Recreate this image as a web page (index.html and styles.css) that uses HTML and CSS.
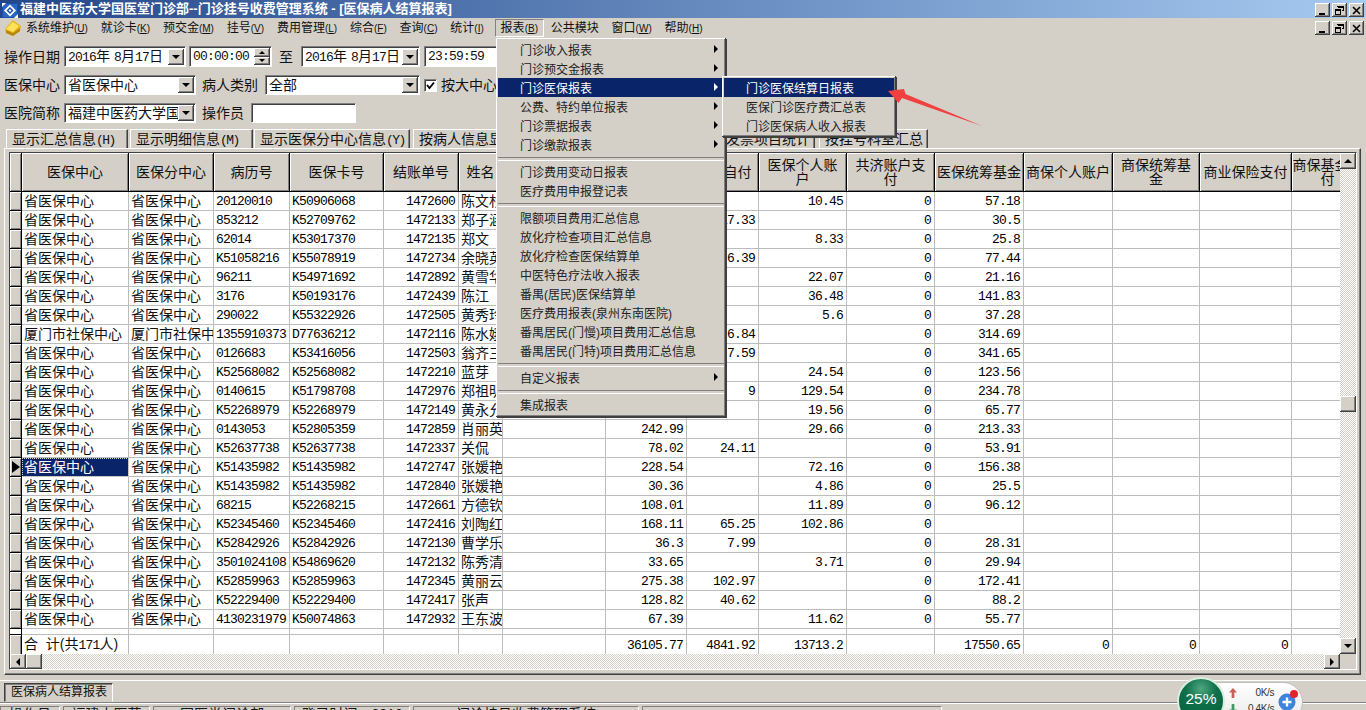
FILE: index.html
```html
<!DOCTYPE html>
<html lang="zh-CN">
<head>
<meta charset="utf-8">
<title>医保病人结算报表</title>
<link rel="stylesheet" href="styles.css">
</head>
<body>
<div class="app">
  <header class="titlebar">
    <svg class="app-icon" width="16" height="15" viewBox="0 0 16 15"><rect width="16" height="15" fill="#1b4fa8"/><rect x="1" y="1" width="14" height="13" fill="#2c66c4"/><path d="M8 1.5 14 7.5 8 13.5 2 7.5Z" fill="#fff"/><path d="M8 4 11.5 7.5 8 11 4.5 7.5Z" fill="#1b4fa8"/><path d="M8 6 9.5 7.5 8 9 6.5 7.5Z" fill="#fff"/><path d="M0 0H4L0 4ZM16 15H12L16 11Z" fill="#fff"/></svg>
    <span class="title-text">福建中医药大学国医堂门诊部--门诊挂号收费管理系统 - [医保病人结算报表]</span>
    <div class="winbtns">
      <button class="winbtn raised"><svg width="9" height="9" viewBox="0 0 9 9"><rect x="1" y="7" width="6" height="2"/></svg></button>
      <button class="winbtn raised"><svg width="9" height="9" viewBox="0 0 9 9"><path d="M2 0H9V5H7V4H8V2H3V1H2ZM0 3H6V9H0ZM1 5V8H5V5Z" fill-rule="evenodd"/></svg></button>
      <button class="winbtn closebtn raised"><svg width="9" height="9" viewBox="0 0 9 9"><path d="M1 1 8 8M8 1 1 8" stroke="#000" stroke-width="1.6"/></svg></button>
    </div>
  </header>

  <nav class="menubar">
    <svg class="menu-logo" width="17" height="17" viewBox="0 0 17 17"><path d="M1 10 9 1 17 7 16 12 9 17 2 14Z" fill="#e8b818"/><path d="M2 10 9 3 15 7 9 13Z" fill="#ffe25a"/><path d="M2 11 9 14 9 17 2 14ZM9 14 16 9 16 12 9 17Z" fill="#b8860f"/></svg>
    <ul class="menu-items">
      <li>系统维护<span class="key">(<u>U</u>)</span></li>
      <li>就诊卡<span class="key">(<u>K</u>)</span></li>
      <li>预交金<span class="key">(<u>M</u>)</span></li>
      <li>挂号<span class="key">(<u>V</u>)</span></li>
      <li>费用管理<span class="key">(<u>L</u>)</span></li>
      <li>综合<span class="key">(<u>F</u>)</span></li>
      <li>查询<span class="key">(<u>C</u>)</span></li>
      <li>统计<span class="key">(<u>I</u>)</span></li>
      <li class="open">报表<span class="key">(<u>B</u>)</span></li>
      <li>公共模块</li>
      <li>窗口<span class="key">(<u>W</u>)</span></li>
      <li>帮助<span class="key">(<u>H</u>)</span></li>
    </ul>
    <div class="winbtns">
      <button class="winbtn raised"><svg width="9" height="9" viewBox="0 0 9 9"><rect x="1" y="7" width="6" height="2"/></svg></button>
      <button class="winbtn raised"><svg width="9" height="9" viewBox="0 0 9 9"><path d="M2 0H9V5H7V4H8V2H3V1H2ZM0 3H6V9H0ZM1 5V8H5V5Z" fill-rule="evenodd"/></svg></button>
      <button class="winbtn closebtn raised"><svg width="9" height="9" viewBox="0 0 9 9"><path d="M1 1 8 8M8 1 1 8" stroke="#000" stroke-width="1.6"/></svg></button>
    </div>
  </nav>

  <section class="filters">
    <div class="frow r1">
      <label class="lbl">操作日期</label>
      <div class="field sunken w-date1"><span class="fval"><span class="d">2016</span>年 <span class="d">8</span>月<span class="d">17</span>日</span><span class="dropbtn raised"><i class="tri-d"></i></span></div>
      <div class="field sunken w-time1 ml3"><span class="fval d">00:00:00</span><span class="spin"><span class="raised"><i class="tri-u"></i></span><span class="raised"><i class="tri-d"></i></span></span></div>
      <span class="lbl zhi">至</span>
      <div class="field sunken w-date2"><span class="fval"><span class="d">2016</span>年 <span class="d">8</span>月<span class="d">17</span>日</span><span class="dropbtn raised"><i class="tri-d"></i></span></div>
      <div class="field sunken w-time2 ml4"><span class="fval d">23:59:59</span><span class="spin"><span class="raised"><i class="tri-u"></i></span><span class="raised"><i class="tri-d"></i></span></span></div>
    </div>
    <div class="frow r2">
      <label class="lbl">医保中心</label>
      <div class="field sunken w-combo"><span class="fval">省医保中心</span><span class="dropbtn raised"><i class="tri-d"></i></span></div>
      <label class="lbl ml6">病人类别</label>
      <div class="field sunken w-type ml7"><span class="fval">全部</span><span class="dropbtn raised"><i class="tri-d"></i></span></div>
      <span class="check sunken ml4"><svg width="9" height="9" viewBox="0 0 9 9"><path d="M1 4 3.5 7 8 1.5" fill="none" stroke="#000" stroke-width="1.8"/></svg></span>
      <label class="lbl ml5">按大中心统计</label>
    </div>
    <div class="frow r3">
      <label class="lbl">医院简称</label>
      <div class="field sunken w-combo"><span class="fval">福建中医药大学国医堂</span><span class="dropbtn raised"><i class="tri-d"></i></span></div>
      <label class="lbl ml6">操作员</label>
      <div class="field sunken w-oper ml7"></div>
    </div>
  </section>

  <div class="tabs">
    <span class="tab t1">显示汇总信息<span class="tkey">(H)</span></span>
    <span class="tab t2">显示明细信息<span class="tkey">(M)</span></span>
    <span class="tab t3">显示医保分中心信息<span class="tkey">(Y)</span></span>
    <span class="tab t4">按病人信息显示<span class="tkey">(P)</span></span>
    <span class="tab t5">按病人费用类别汇总<span class="tkey">(K)</span></span>
    <span class="tab t6">按发票项目统计</span>
    <span class="tab t7">按挂号科室汇总</span>
  </div>

  <main class="panel">
    <div class="grid">
      <div class="grid-body">
        <table class="data">
          <colgroup><col class="c0"><col class="c1"><col class="c2"><col class="c3"><col class="c4"><col class="c5"><col class="c6"><col class="c7"><col class="c8"><col class="c9"><col class="c10"><col class="c11"><col class="c12"><col class="c13"><col class="c14"><col class="c15"><col class="c16"></colgroup>
          <thead>
            <tr><th></th><th>医保中心</th><th>医保分中心</th><th>病历号</th><th>医保卡号</th><th>结账单号</th><th>姓名</th><th>科室</th><th>费用合计</th><th class="ziifu">现金自付</th><th>医保个人账<br>户</th><th>共济账户支<br>付</th><th>医保统筹基金</th><th>商保个人账户</th><th>商保统筹基<br>金</th><th>商业保险支付</th><th>商保基金支<br>付</th></tr>
          </thead>
          <tbody>
            <tr><th></th><td>省医保中心</td><td>省医保中心</td><td class="n">20120010</td><td class="n">K50906068</td><td class="n r">1472600</td><td>陈文杉</td><td></td><td class="n r">67.63</td><td class="n r"></td><td class="n r">10.45</td><td class="n r">0</td><td class="n r">57.18</td><td></td><td></td><td></td><td></td></tr>
            <tr><th></th><td>省医保中心</td><td>省医保中心</td><td class="n">853212</td><td class="n">K52709762</td><td class="n r">1472133</td><td>郑子涵</td><td></td><td class="n r">47.83</td><td class="n r">17.33</td><td class="n r"></td><td class="n r">0</td><td class="n r">30.5</td><td></td><td></td><td></td><td></td></tr>
            <tr><th></th><td>省医保中心</td><td>省医保中心</td><td class="n">62014</td><td class="n">K53017370</td><td class="n r">1472135</td><td>郑文</td><td></td><td class="n r">34.13</td><td class="n r"></td><td class="n r">8.33</td><td class="n r">0</td><td class="n r">25.8</td><td></td><td></td><td></td><td></td></tr>
            <tr><th></th><td>省医保中心</td><td>省医保中心</td><td class="n">K51058216</td><td class="n">K55078919</td><td class="n r">1472734</td><td>余晓英</td><td></td><td class="n r">83.83</td><td class="n r">6.39</td><td class="n r"></td><td class="n r">0</td><td class="n r">77.44</td><td></td><td></td><td></td><td></td></tr>
            <tr><th></th><td>省医保中心</td><td>省医保中心</td><td class="n">96211</td><td class="n">K54971692</td><td class="n r">1472892</td><td>黄雪华</td><td></td><td class="n r">43.23</td><td class="n r"></td><td class="n r">22.07</td><td class="n r">0</td><td class="n r">21.16</td><td></td><td></td><td></td><td></td></tr>
            <tr><th></th><td>省医保中心</td><td>省医保中心</td><td class="n">3176</td><td class="n">K50193176</td><td class="n r">1472439</td><td>陈江</td><td></td><td class="n r">178.31</td><td class="n r"></td><td class="n r">36.48</td><td class="n r">0</td><td class="n r">141.83</td><td></td><td></td><td></td><td></td></tr>
            <tr><th></th><td>省医保中心</td><td>省医保中心</td><td class="n">290022</td><td class="n">K55322926</td><td class="n r">1472505</td><td>黄秀玲</td><td></td><td class="n r">42.88</td><td class="n r"></td><td class="n r">5.6</td><td class="n r">0</td><td class="n r">37.28</td><td></td><td></td><td></td><td></td></tr>
            <tr><th></th><td>厦门市社保中心</td><td>厦门市社保中心</td><td class="n">1355910373</td><td class="n">D77636212</td><td class="n r">1472116</td><td>陈水娥</td><td></td><td class="n r">321.53</td><td class="n r">6.84</td><td class="n r"></td><td class="n r">0</td><td class="n r">314.69</td><td></td><td></td><td></td><td></td></tr>
            <tr><th></th><td>省医保中心</td><td>省医保中心</td><td class="n">0126683</td><td class="n">K53416056</td><td class="n r">1472503</td><td>翁齐三</td><td></td><td class="n r">349.24</td><td class="n r">7.59</td><td class="n r"></td><td class="n r">0</td><td class="n r">341.65</td><td></td><td></td><td></td><td></td></tr>
            <tr><th></th><td>省医保中心</td><td>省医保中心</td><td class="n">K52568082</td><td class="n">K52568082</td><td class="n r">1472210</td><td>蓝芽</td><td></td><td class="n r">148.1</td><td class="n r"></td><td class="n r">24.54</td><td class="n r">0</td><td class="n r">123.56</td><td></td><td></td><td></td><td></td></tr>
            <tr><th></th><td>省医保中心</td><td>省医保中心</td><td class="n">0140615</td><td class="n">K51798708</td><td class="n r">1472976</td><td>郑祖明</td><td></td><td class="n r">373.32</td><td class="n r">9</td><td class="n r">129.54</td><td class="n r">0</td><td class="n r">234.78</td><td></td><td></td><td></td><td></td></tr>
            <tr><th></th><td>省医保中心</td><td>省医保中心</td><td class="n">K52268979</td><td class="n">K52268979</td><td class="n r">1472149</td><td>黄永允</td><td></td><td class="n r">85.33</td><td class="n r"></td><td class="n r">19.56</td><td class="n r">0</td><td class="n r">65.77</td><td></td><td></td><td></td><td></td></tr>
            <tr><th></th><td>省医保中心</td><td>省医保中心</td><td class="n">0143053</td><td class="n">K52805359</td><td class="n r">1472859</td><td>肖丽英</td><td></td><td class="n r">242.99</td><td class="n r"></td><td class="n r">29.66</td><td class="n r">0</td><td class="n r">213.33</td><td></td><td></td><td></td><td></td></tr>
            <tr><th></th><td>省医保中心</td><td>省医保中心</td><td class="n">K52637738</td><td class="n">K52637738</td><td class="n r">1472337</td><td>关侃</td><td></td><td class="n r">78.02</td><td class="n r">24.11</td><td class="n r"></td><td class="n r">0</td><td class="n r">53.91</td><td></td><td></td><td></td><td></td></tr>
            <tr class="current"><th><i class="tri-r"></i></th><td class="sel">省医保中心</td><td>省医保中心</td><td class="n">K51435982</td><td class="n">K51435982</td><td class="n r">1472747</td><td>张媛艳</td><td></td><td class="n r">228.54</td><td class="n r"></td><td class="n r">72.16</td><td class="n r">0</td><td class="n r">156.38</td><td></td><td></td><td></td><td></td></tr>
            <tr><th></th><td>省医保中心</td><td>省医保中心</td><td class="n">K51435982</td><td class="n">K51435982</td><td class="n r">1472840</td><td>张媛艳</td><td></td><td class="n r">30.36</td><td class="n r"></td><td class="n r">4.86</td><td class="n r">0</td><td class="n r">25.5</td><td></td><td></td><td></td><td></td></tr>
            <tr><th></th><td>省医保中心</td><td>省医保中心</td><td class="n">68215</td><td class="n">K52268215</td><td class="n r">1472661</td><td>方德钦</td><td></td><td class="n r">108.01</td><td class="n r"></td><td class="n r">11.89</td><td class="n r">0</td><td class="n r">96.12</td><td></td><td></td><td></td><td></td></tr>
            <tr><th></th><td>省医保中心</td><td>省医保中心</td><td class="n">K52345460</td><td class="n">K52345460</td><td class="n r">1472416</td><td>刘陶红</td><td></td><td class="n r">168.11</td><td class="n r">65.25</td><td class="n r">102.86</td><td class="n r">0</td><td class="n r"></td><td></td><td></td><td></td><td></td></tr>
            <tr><th></th><td>省医保中心</td><td>省医保中心</td><td class="n">K52842926</td><td class="n">K52842926</td><td class="n r">1472130</td><td>曹学乐</td><td></td><td class="n r">36.3</td><td class="n r">7.99</td><td class="n r"></td><td class="n r">0</td><td class="n r">28.31</td><td></td><td></td><td></td><td></td></tr>
            <tr><th></th><td>省医保中心</td><td>省医保中心</td><td class="n">3501024108</td><td class="n">K54869620</td><td class="n r">1472132</td><td>陈秀清</td><td></td><td class="n r">33.65</td><td class="n r"></td><td class="n r">3.71</td><td class="n r">0</td><td class="n r">29.94</td><td></td><td></td><td></td><td></td></tr>
            <tr><th></th><td>省医保中心</td><td>省医保中心</td><td class="n">K52859963</td><td class="n">K52859963</td><td class="n r">1472345</td><td>黄丽云</td><td></td><td class="n r">275.38</td><td class="n r">102.97</td><td class="n r"></td><td class="n r">0</td><td class="n r">172.41</td><td></td><td></td><td></td><td></td></tr>
            <tr><th></th><td>省医保中心</td><td>省医保中心</td><td class="n">K52229400</td><td class="n">K52229400</td><td class="n r">1472417</td><td>张声</td><td></td><td class="n r">128.82</td><td class="n r">40.62</td><td class="n r"></td><td class="n r">0</td><td class="n r">88.2</td><td></td><td></td><td></td><td></td></tr>
            <tr><th></th><td>省医保中心</td><td>省医保中心</td><td class="n">4130231979</td><td class="n">K50074863</td><td class="n r">1472932</td><td>王东波</td><td></td><td class="n r">67.39</td><td class="n r"></td><td class="n r">11.62</td><td class="n r">0</td><td class="n r">55.77</td><td></td><td></td><td></td><td></td></tr>
            <tr class="gap"><th></th><td></td><td></td><td></td><td></td><td></td><td></td><td></td><td></td><td></td><td></td><td></td><td></td><td></td><td></td><td></td><td></td></tr>
            <tr class="total"><th></th><td>合&nbsp;&nbsp;计<span class="tot">(共<span class="d">171</span>人)</span></td><td></td><td></td><td></td><td></td><td></td><td></td><td class="n r">36105.77</td><td class="n r">4841.92</td><td class="n r">13713.2</td><td></td><td class="n r">17550.65</td><td class="n r">0</td><td class="n r">0</td><td class="n r">0</td><td></td></tr>
          </tbody>
        </table>
      </div>
      <div class="vscroll track">
        <span class="sbtn raised"><i class="tri-u"></i></span>
        <span class="vspace"></span>
        <span class="sthumb raised"></span>
        <span class="vspace2"></span>
        <span class="sbtn raised"><i class="tri-d"></i></span>
      </div>
      <div class="hscroll track">
        <span class="sbtn raised"><i class="tri-l"></i></span>
        <span class="sthumb raised"></span>
        <span class="hspace"></span>
        <span class="sbtn raised"><i class="tri-r"></i></span>
      </div>
      <div class="corner"></div>
    </div>
  </main>

  <div class="winbar"><span class="wintab">医保病人结算报表</span></div>

  <footer class="status">
    <span class="sbox s1">操作员</span>
    <span class="sbox s2">福建中医药</span>
    <span class="sbox s3">国医堂门诊部</span>
    <span class="sbox s4">登录时间：2016</span>
    <span class="sbox s5">门诊挂号收费管理系统</span>
    <span class="sbox s6"></span>
  </footer>

  <div class="menu dropdown">
    <div class="mi">门诊收入报表<i class="tri-r"></i></div>
    <div class="mi">门诊预交金报表<i class="tri-r"></i></div>
    <div class="mi active">门诊医保报表<i class="tri-r"></i></div>
    <div class="mi">公费、特约单位报表<i class="tri-r"></i></div>
    <div class="mi">门诊票据报表<i class="tri-r"></i></div>
    <div class="mi">门诊缴款报表<i class="tri-r"></i></div>
    <div class="sep"></div>
    <div class="mi">门诊费用变动日报表</div>
    <div class="mi">医疗费用申报登记表</div>
    <div class="sep"></div>
    <div class="mi">限额项目费用汇总信息</div>
    <div class="mi">放化疗检查项目汇总信息</div>
    <div class="mi">放化疗检查医保结算单</div>
    <div class="mi">中医特色疗法收入报表</div>
    <div class="mi">番禺(居民)医保结算单</div>
    <div class="mi">医疗费用报表(泉州东南医院)</div>
    <div class="mi">番禺居民(门慢)项目费用汇总信息</div>
    <div class="mi">番禺居民(门特)项目费用汇总信息</div>
    <div class="sep"></div>
    <div class="mi">自定义报表<i class="tri-r"></i></div>
    <div class="sep"></div>
    <div class="mi">集成报表</div>
  </div>

  <div class="menu submenu">
    <div class="mi active">门诊医保结算日报表</div>
    <div class="mi">医保门诊医疗费汇总表</div>
    <div class="mi">门诊医保病人收入报表</div>
  </div>

  <svg class="callout" width="110" height="50" viewBox="880 82 110 50"><path d="M888 91 904 89 905.500 94 982 126 902 98 898.500 103Z" fill="#f04040"/></svg>

  <aside class="netwidget">
    <div class="pill">
      <svg class="net-up" width="8" height="10" viewBox="0 0 9 11"><path d="M4.500 0 9 5H6V11H3V5H0Z" fill="#c8605a"/></svg>
      <svg class="net-down" width="8" height="10" viewBox="0 0 9 11"><path d="M4.500 11 9 6H6V0H3V6H0Z" fill="#3f9a62"/></svg>
      <span class="rate up">0K/s</span>
      <span class="rate down">0.4K/s</span>
      <span class="plus"><svg width="26" height="28" viewBox="0 0 26 28"><circle cx="10" cy="15" r="8.500" fill="#3f82dc"/><path d="M10 10.500V19.500M5.500 15H14.500" stroke="#fff" stroke-width="2.400"/><circle cx="17" cy="7" r="4" fill="#e8212c"/></svg></span>
    </div>
    <div class="gauge">25%</div>
  </aside>
</div>
</body>
</html>
```

FILE: styles.css
```css
* { box-sizing: border-box; }
html, body { margin: 0; height: 710px; overflow: hidden; }
body { background: #d4d0c8; font: 14px/18px "Liberation Sans", "Noto Sans CJK SC", sans-serif; color: #111; }
ul { list-style: none; margin: 0; padding: 0; }
i { display: block; font-style: normal; }

.app { position: relative; width: 1366px; height: 710px; display: flex; flex-direction: column; overflow: hidden; }

.raised { background: #d4d0c8; box-shadow: inset -1px -1px 0 #404040, inset 1px 1px 0 #fff, inset -2px -2px 0 #808080; }
.sunken { background: #fff; border: 1px solid; border-color: #808080 #fff #fff #808080; box-shadow: inset 1px 1px 0 #404040; }

.tri-d, .tri-u, .tri-l, .tri-r { width: 0; height: 0; border-style: solid; border-color: transparent; }
.tri-d { border-width: 4px 4px 0; border-top-color: #000; }
.tri-u { border-width: 0 4px 4px; border-bottom-color: #000; }
.tri-l { border-width: 4px 4px 4px 0; border-right-color: #000; }
.tri-r { border-width: 4px 0 4px 4px; border-left-color: #000; }

/* title bar */
.titlebar { flex: 0 0 18px; display: flex; align-items: center; padding: 0 2px; background: linear-gradient(90deg, #23468a, #a6caf0); color: #fff; }
.app-icon { flex: none; margin-top: 2px; }
.title-text { margin-left: 2px; font-size: 13px; font-weight: 700; line-height: 18px; white-space: nowrap; }
.winbtns { margin-left: auto; display: flex; gap: 2px; }
.winbtn { width: 15px; height: 14px; padding: 0; border: 0; display: flex; align-items: center; justify-content: center; }
.titlebar .winbtns { margin-top: 2px; }

/* menu bar */
.menubar { flex: 0 0 19px; display: flex; align-items: center; padding: 0 2px 0 4px; font-size: 12px; }
.menu-logo { flex: none; margin-right: 5px; }
.menu-items { display: flex; gap: 12.8px; white-space: nowrap; }
.menu-items li { line-height: 18px; height: 18px; }
.key { font-size: 10px; }
.menu-items .open { margin: 0 -6px 0 -2px; padding: 0 5px; border: 1px solid; border-color: #808080 #fff #fff #808080; line-height: 16px; }
.menubar .winbtns { margin-top: 1px; }

/* filters */
.filters { flex: 0 0 92px; padding-top: 9px; display: flex; flex-direction: column; gap: 8px; }
.frow { display: flex; align-items: center; padding-left: 4px; white-space: nowrap; }
.r1 { height: 21px; } .r2, .r3 { height: 20px; }
.lbl { width: 56px; margin-right: 4px; flex: none; }
.ml3 { margin-left: 3px; } .ml4 { margin-left: 4px; } .ml7 { margin-left: 3px; }
.zhi { width: 14px; margin: 0 8px 0 7px; }
.lbl.ml6 { margin-left: 6px; }
.r3 .lbl.ml6 { width: 42px; margin-right: 4px; }
.lbl.ml5 { width: 90px; margin-left: 4px; }
.field { display: flex; align-items: center; justify-content: space-between; height: 100%; padding: 1px 1px 1px 3px; overflow: hidden; flex: none; }
.fval { overflow: hidden; white-space: nowrap; flex: 1; min-width: 0; }
.d { font-family: "Liberation Mono", monospace; font-size: 13px; letter-spacing: -.8px; }
.w-date1 { width: 122px; } .w-time1 { width: 83px; } .w-date2 { width: 119px; } .w-time2 { width: 90px; }
.w-combo { width: 132px; } .w-type { width: 155px; } .w-oper { width: 105px; }
.dropbtn { flex: none; width: 16px; height: 16px; display: flex; align-items: center; justify-content: center; }
.spin { flex: none; width: 16px; height: 100%; display: flex; flex-direction: column; }
.spin span { flex: 1; display: flex; align-items: center; justify-content: center; }
.spin i { border-width: 3px; }
.spin .tri-u { border-top-width: 0; } .spin .tri-d { border-bottom-width: 0; }
.check { flex: none; width: 13px; height: 13px; display: flex; align-items: center; justify-content: center; }

/* tabs */
.tabs { flex: 0 0 19px; display: flex; padding-left: 6px; white-space: nowrap; }
.tab { flex: none; height: 19px; padding: 0 0 0 5px; line-height: 18px; overflow: hidden; border-top: 1px solid #fff; border-left: 1px solid #fff; border-right: 1px solid #404040; box-shadow: inset -1px 0 0 #808080; }
.tkey { font: 13px/18px "Liberation Mono", monospace; letter-spacing: -1.5px; }
.t1 { width: 122px; margin-right: 2px; } .t2 { width: 123px; margin-right: 1px; } .t3 { width: 156px; margin-right: 3px; } .t4 { width: 130px; } .t5 { width: 163px; } .t6 { width: 109px; margin-right: 4px; } .t7 { width: 109px; }

/* main panel */
.panel { flex: 0 0 527px; margin: 0 5px 5px 4px; padding: 3px 4px 4px; border: 1px solid; border-color: #fff #404040 #404040 #fff; box-shadow: inset -1px -1px 0 #808080; }
.grid { display: grid; grid-template-columns: 1330px 16px; grid-template-rows: 501px 15px; border: 1px solid; border-color: #404040 #fff #fff #404040; height: 518px; width: 1348px; }
.grid-body { background: #fff; overflow: hidden; }
.data { table-layout: fixed; width: 1354px; border-collapse: separate; border-spacing: 0; }
.c0 { width: 12px; } .c1 { width: 107px; } .c2 { width: 85px; } .c3 { width: 76px; } .c4 { width: 94px; } .c5 { width: 75px; } .c6 { width: 44px; } .c7 { width: 103px; } .c8 { width: 81px; } .c9 { width: 72px; } .c10 { width: 88px; } .c11 { width: 88px; } .c12 { width: 89px; } .c13 { width: 89px; } .c14 { width: 87px; } .c15 { width: 92px; } .c16 { width: 72px; }

.data th { padding: 0; font-weight: 400; background: #d4d0c8; border-right: 1px solid #000; border-bottom: 1px solid #000; box-shadow: inset 1px 1px 0 #fff, inset -1px -1px 0 #808080; overflow: hidden; }
.data thead th { height: 39px; line-height: 14px; white-space: nowrap; }
.data thead .ziifu { padding-left: 2px; }
.data td { height: 19px; padding: 0 2px; line-height: 18px; border-right: 1px solid #bcbcbc; border-bottom: 1px solid #bcbcbc; white-space: nowrap; overflow: hidden; background: #fff; }
.data tbody th { height: 19px; }
.data td.n { padding-top: 2px; line-height: 16px; font-family: "Liberation Mono", monospace; font-size: 13px; letter-spacing: -.8px; color: #000; }
.data td.r { text-align: right; padding-right: 3px; }
.data td.sel { background: #0a246a; color: #fff; outline: 1px dotted #d4d0c8; outline-offset: -1px; }
.current th .tri-r { margin: 0 0 0 2px; border-width: 6px 0 6px 8px; }
.data .gap td, .data .gap th { height: 6px; line-height: 0; font-size: 0; }
.data .gap th { background: #fff; box-shadow: none; }

.track { background: repeating-conic-gradient(#fff 0 25%, #d4d0c8 0 50%) 0 0 / 2px 2px; }
.vscroll { display: flex; flex-direction: column; }
.hscroll { display: flex; }
.sbtn { flex: none; width: 16px; height: 16px; display: flex; align-items: center; justify-content: center; }
.hscroll .sbtn { height: 15px; }
.sthumb { flex: none; width: 16px; height: 16px; }
.hscroll .sthumb { height: 15px; }
.vspace { height: 227px; flex: none; }
.vspace2 { flex: 1; }
.hspace { flex: 1; }
.corner { background: #d4d0c8; }

/* window strip */
.winbar { flex: 0 0 22px; padding: 2px 0 0 4px; border-top: 1px solid #fff; border-bottom: 1px solid #808080; box-shadow: inset 0 -1px 0 #d4d0c8; }
.wintab { display: block; width: 109px; height: 19px; padding-left: 6px; font-size: 12px; line-height: 17px; border: 1px solid; border-color: #404040 #fff #d4d0c8 #404040; box-shadow: inset 1px 1px 0 #808080; white-space: nowrap; }

/* status bar */
.status { flex: 0 0 8px; padding-top: 2px; display: flex; gap: 3px; border-top: 1px solid #fff; overflow: hidden; }
.sbox { flex: none; height: 24px; line-height: 14px; text-align: center; border: 1px solid; border-color: #808080 #fff #fff #808080; white-space: nowrap; overflow: hidden; }
.s1 { width: 60px; } .s2 { width: 87px; } .s3 { width: 138px; } .s4 { width: 116px; } .s5 { width: 226px; } .s6 { width: 300px; }

/* menus */
.menu { position: absolute; background: #d4d0c8; font-size: 12px; white-space: nowrap; box-shadow: inset -1px -1px 0 #404040, inset 1px 1px 0 #fff, inset -2px -2px 0 #808080, 1px 1px 0 #404040; }
.dropdown { left: 496px; top: 38px; width: 230px; height: 379px; padding: 2px; }
.submenu { left: 722px; top: 76px; width: 174px; height: 61px; padding: 2px; }
.mi { position: relative; height: 19px; line-height: 23px; padding-left: 22px; color: #222; overflow: hidden; }
.mi .tri-r { position: absolute; right: 6px; top: 5px; }
.mi.active { background: #0a246a; color: #fff; }
.mi.active .tri-r { border-left-color: #fff; }
.sep { height: 8px; padding-top: 3px; }
.sep::before { content: ""; display: block; height: 2px; border-top: 1px solid #808080; border-bottom: 1px solid #fff; }

.callout { position: absolute; left: 880px; top: 82px; }

/* network widget */
.netwidget { position: absolute; left: 1177px; top: 677px; width: 126px; height: 48px; }
.gauge { position: absolute; left: 0; top: 0; width: 48px; height: 48px; border-radius: 50%; border: 2px solid #d9ece0; background: radial-gradient(circle at 50% 22%, #4da67f 0, #0e7049 38%, #075a3a 100%); color: #fff; font: 15.500px/40px "Liberation Sans", sans-serif; text-align: center; }
.pill { position: absolute; left: 24px; top: 5px; width: 102px; height: 40px; background: linear-gradient(#fff, #e9e9e9); border: 1px solid #bfbfbf; border-radius: 0 20px 20px 0; font: 10px/12px "Liberation Sans", sans-serif; letter-spacing: -.4px; color: #333; }
.net-up { position: absolute; left: 27px; top: 5px; }
.net-down { position: absolute; left: 27px; top: 21px; }
.rate { position: absolute; right: 28px; }
.rate.up { top: 4px; }
.rate.down { top: 20px; }
.plus { position: absolute; left: 75px; top: 4px; }
```
